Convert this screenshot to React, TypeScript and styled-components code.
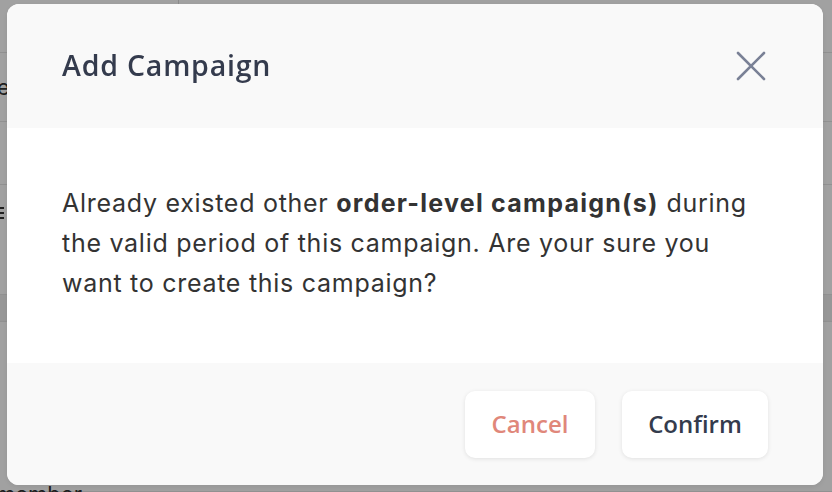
import React from "react";
import styled, { createGlobalStyle } from "styled-components";

const Global = createGlobalStyle`
  html, body { margin: 0; padding: 0; }
  body {
    width: 832px;
    height: 492px;
    overflow: hidden;
    background: #ffffff;
    font-family: "Open Sans", "Noto Sans", sans-serif;
  }
`;

const Page = styled.div`
  width: 832px;
  height: 492px;
  display: flex;
  flex-direction: column;
  background: #ffffff;
  color: #333;
  font-family: "Inter", sans-serif;
`;

const TopBar = styled.div`
  height: 53px;
  border-bottom: 1px solid #e6e6e6;
  display: flex;
  box-sizing: border-box;
`;

const TopCell = styled.div<{ $w: number }>`
  width: ${(p) => p.$w}px;
  border-right: 1px solid #dcdcdc;
`;

const Row = styled.div<{ $h: number; $bg?: string; $top?: number }>`
  height: ${(p) => p.$h}px;
  flex: none;
  border-bottom: 1px solid #e6e6e6;
  background: ${(p) => p.$bg || "#fff"};
  display: flex;
  align-items: ${(p) => (p.$top !== undefined ? "flex-start" : "center")};
  padding-top: ${(p) => p.$top || 0}px;
  font-size: 24px;
  color: #333;
  box-sizing: border-box;
`;

const BgText = styled.span<{ $shift?: number }>`
  margin-left: ${(p) => p.$shift ?? -10}px;
  font-size: 22px;
  line-height: 1;
`;

const Hamburger = styled.span`
  margin-left: -12px;
  width: 16px;
  height: 12px;
  border-top: 2px solid #333;
  border-bottom: 2px solid #333;
  box-sizing: border-box;
  position: relative;
  &::after {
    content: "";
    position: absolute;
    left: 0;
    right: 0;
    top: 3px;
    border-top: 2px solid #333;
  }
`;

const Overlay = styled.div`
  position: fixed;
  inset: 0;
  background: rgba(0, 0, 0, 0.37);
  display: flex;
  align-items: flex-start;
  justify-content: flex-start;
  padding: 4px 0 0 7px;
  box-sizing: border-box;
`;

const Modal = styled.div`
  width: 816px;
  height: 481px;
  border-radius: 12px;
  overflow: hidden;
  display: flex;
  flex-direction: column;
  background: #fff;
  box-shadow: 0 2px 6px rgba(0, 0, 0, 0.08);
`;

const Header = styled.div`
  height: 124px;
  flex: none;
  background: #f9f9f9;
  display: flex;
  align-items: center;
  justify-content: space-between;
  padding: 0 56px 0 55px;
  box-sizing: border-box;
`;

const Title = styled.h2`
  margin: 0;
  font-family: "Open Sans", sans-serif;
  font-weight: 600;
  font-size: 28.5px;
  color: #343b4d;
  letter-spacing: 0.8px;
  transform: translateY(-1px);
`;

const CloseButton = styled.button`
  border: none;
  background: transparent;
  padding: 0;
  width: 32px;
  height: 32px;
  display: flex;
  align-items: center;
  justify-content: center;
  cursor: pointer;
`;

const Body = styled.div`
  flex: 1;
  background: #ffffff;
  padding: 55px 55px 0 55px;
  box-sizing: border-box;
`;

const Message = styled.p`
  margin: 0;
  max-width: 700px;
  font-family: "Inter", sans-serif;
  font-size: 25px;
  line-height: 40px;
  color: #333333;
  letter-spacing: 0.72px;

  strong {
    font-weight: 700;
    letter-spacing: 1.25px;
  }
`;

const Footer = styled.div`
  height: 122px;
  flex: none;
  background: #f9f9f9;
  display: flex;
  align-items: flex-start;
  justify-content: flex-end;
  gap: 27px;
  padding: 28px 55px 0 0;
  box-sizing: border-box;
`;

const Button = styled.button<{ $tone: "danger" | "default"; $w: number }>`
  width: ${(p) => p.$w}px;
  height: 67px;
  border: none;
  border-radius: 10px;
  background: #ffffff;
  box-shadow: 0 1px 4px rgba(0, 0, 0, 0.1);
  font-family: "Open Sans", sans-serif;
  font-weight: 600;
  font-size: 24px;
  padding: 0 0 2px 0;
  color: ${(p) => (p.$tone === "danger" ? "#e0877a" : "#343b4d")};
  cursor: pointer;
`;

export default function App() {
  return (
    <>
      <Global />
      <Page>
        <TopBar>
          <TopCell $w={178} />
        </TopBar>
        <Row $h={69}>
          <BgText>te</BgText>
        </Row>
        <Row $h={63} />
        <Row $h={110} $top={22}>
          <Hamburger />
        </Row>
        <Row $h={27} $bg="#f0f0f0" />
        <Row $h={170} $top={161}>
          <BgText $shift={-4}>member</BgText>
        </Row>
      </Page>
      <Overlay>
        <Modal role="dialog" aria-labelledby="dlg-title">
          <Header>
            <Title id="dlg-title">Add Campaign</Title>
            <CloseButton aria-label="Close">
              <svg width="30" height="30" viewBox="0 0 30 30" fill="none">
                <path
                  d="M2 2 L28 28 M28 2 L2 28"
                  stroke="#7a8196"
                  strokeWidth="2.6"
                  strokeLinecap="round"
                />
              </svg>
            </CloseButton>
          </Header>
          <Body>
            <Message>
              Already existed other <strong>order-level campaign(s)</strong> during
              the valid period of this campaign. Are your sure you want to create
              this campaign?
            </Message>
          </Body>
          <Footer>
            <Button $tone="danger" $w={130}>Cancel</Button>
            <Button $tone="default" $w={146}>Confirm</Button>
          </Footer>
        </Modal>
      </Overlay>
    </>
  );
}
